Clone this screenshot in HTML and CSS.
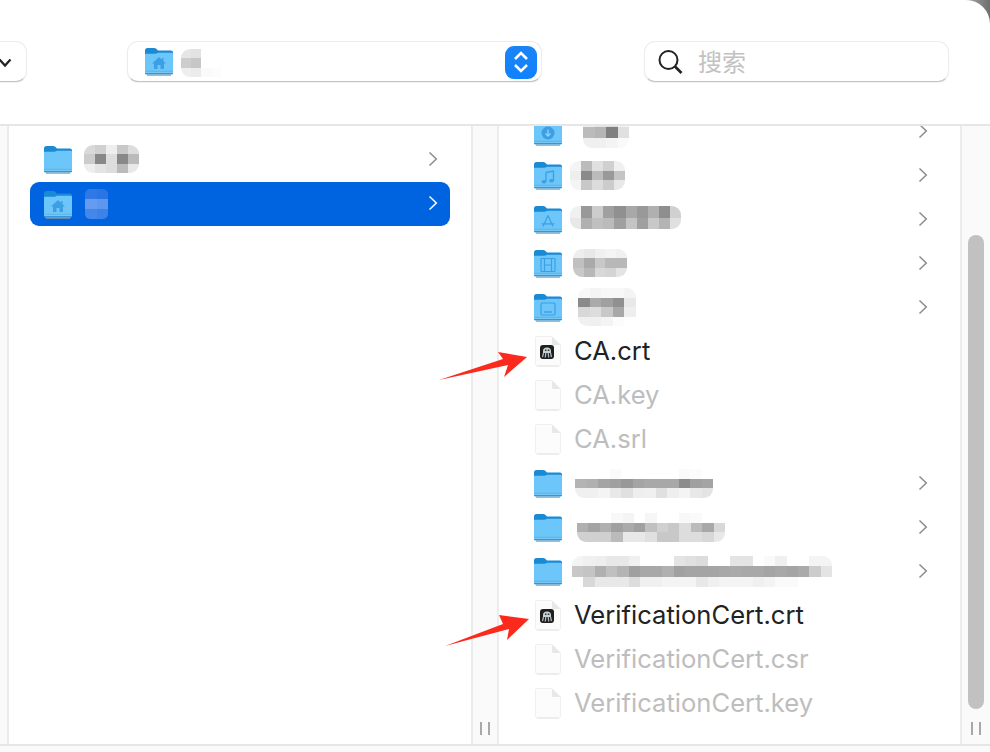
FILE: index.html
```html
<!DOCTYPE html>
<html lang="zh">
<head>
  <meta charset="utf-8">
  <meta name="viewport" content="width=device-width, initial-scale=1.0">
  <title>Finder</title>
  <link rel="stylesheet" href="styles.css">
</head>
<body>
  <!-- shared icons -->
  <svg class="defs" width="0" height="0">
    <symbol id="folder" viewBox="0 0 30 29">
      <path d="M1 3.500Q1 1 3.500 1H10Q11.500 1 12.500 2L14 3.500H27Q29 3.500 29 5.500V12H1Z" fill="#1a8ad4"/>
      <path d="M1 7.500Q1 6.800 2 6.800H11Q12.500 6.800 14 5.800H28Q29 5.800 29 6.800V25.500Q29 27.500 27 27.500H3Q1 27.500 1 25.500Z" fill="#6cc6fa"/>
      <path d="M1 22.500H29V25.500Q29 27.500 27 27.500H3Q1 27.500 1 25.500Z" fill="#5cb9f2"/>
      <path d="M1 23H29M1 25.600H29" stroke="#86d0f8" stroke-width=".7"/>
      <path d="M1 26.600H29" stroke="#2f93d6" stroke-width="1"/>
      <path d="M3 28.200H27" stroke="#8d959c" stroke-width="1"/>
    </symbol>
    <symbol id="doc" viewBox="0 0 29 32">
      <path d="M2.500 3Q2.500 1.500 4 1.500H19L27.500 10V29Q27.500 30.500 26 30.500H4Q2.500 30.500 2.500 29Z" fill="#fcfcfc" stroke="#f0f0f0"/>
      <path d="M19 1.500V8.500Q19 10 20.500 10H27.500Z" fill="#e8e8e8"/>
      <path d="M4 31.300H26" stroke="#e2e2e2" stroke-width=".8"/>
    </symbol>
    <symbol id="cert" viewBox="0 0 29 32">
      <use href="#doc" width="29" height="32"/>
      <rect x="7" y="10" width="14" height="14" rx="3" fill="#1f1f1f"/>
      <path d="M10 17Q9.500 12.500 14 12.500T18 17V18H10Z" fill="#c8d1d6"/>
      <path d="M10.500 18L9.500 22M12.800 18L12.300 22.500M15.200 18L15.700 22.500M17.500 18L18.500 22" stroke="#aeb8bf" stroke-width="1.300" fill="none"/>
      <rect x="12" y="14.500" width="1.500" height="1.500" fill="#333"/><rect x="14.800" y="14.500" width="1.500" height="1.500" fill="#333"/>
    </symbol>
    <symbol id="chev" viewBox="0 0 10 16">
      <path d="M1.500 1.500L8.300 8L1.500 14.500" fill="none" stroke="currentColor" stroke-width="1.500"/>
    </symbol>
  </svg>

  <div class="window">
    <header class="toolbar">
      <div class="group-btn">
        <svg width="14" height="10" viewBox="0 0 14 10"><path d="M1.500 1.500L7 7.500L12.500 1.500" fill="none" stroke="#222" stroke-width="2.200"/></svg>
      </div>
      <div class="path-select">
        <span class="icon-wrap">
          <svg class="folder" width="30" height="29"><use href="#folder"/></svg>
          <svg class="glyph" width="16" height="14" viewBox="0 0 16 14"><path d="M8 1L1 7.500H3V13H6.500V9H9.500V13H13V7.500H15L12.500 5.200V2H11V3.800Z" fill="#3c9fe4"/></svg>
        </span>
        <svg class="blur blur-path" viewBox="0 0 5 3" width="50" height="28" preserveAspectRatio="none">
          <rect x="0" y="0" fill="#e6e6e6"/><rect x="1" y="0" fill="#e2e2e2"/>
          <rect x="0" y="1" fill="#cdcdcd"/><rect x="1" y="1" fill="#c6c6c6"/>
          <rect x="0" y="2" fill="#eeeeee"/><rect x="1" y="2" fill="#ebebeb"/>
          <rect x="2" y="2" fill="#fafafa"/><rect x="3" y="2" fill="#fcfcfc"/>
        </svg>
        <span class="stepper">
          <svg width="20" height="26" viewBox="0 0 20 26"><path d="M4 10L10 4L16 10M4 16L10 22L16 16" fill="none" stroke="#fff" stroke-width="2.600"/></svg>
        </span>
      </div>
      <div class="search">
        <svg class="search-icon" width="26" height="28" viewBox="0 0 26 28"><circle cx="11.500" cy="12" r="9" fill="none" stroke="#222" stroke-width="2"/><path d="M18 18.500L24.500 25" stroke="#222" stroke-width="2.600"/></svg>
        <span class="search-text">搜索</span>
      </div>
    </header>

    <main class="browser">
      <div class="edge"></div>

      <section class="column column-left">
        <div class="row">
          <svg class="folder" width="30" height="29"><use href="#folder"/></svg>
          <svg class="blur blur-a" viewBox="0 0 5 3" width="55" height="28" preserveAspectRatio="none">
            <rect x="0" y="0" fill="#d9d9d9"/><rect x="1" y="0" fill="#d0d0d0"/><rect x="2" y="0" fill="#eeeeee"/><rect x="3" y="0" fill="#c8c8c8"/><rect x="4" y="0" fill="#dddddd"/>
            <rect x="0" y="1" fill="#cccccc"/><rect x="1" y="1" fill="#888888"/><rect x="2" y="1" fill="#dddddd"/><rect x="3" y="1" fill="#888888"/><rect x="4" y="1" fill="#bbbbbb"/>
            <rect x="0" y="2" fill="#eeeeee"/><rect x="1" y="2" fill="#e4e4e4"/><rect x="2" y="2" fill="#dddddd"/><rect x="3" y="2" fill="#bbbbbb"/><rect x="4" y="2" fill="#e8e8e8"/>
          </svg>
          <svg class="chevron" width="10" height="16"><use href="#chev"/></svg>
        </div>
        <div class="row selected">
          <span class="icon-wrap">
            <svg class="folder" width="30" height="29"><use href="#folder"/></svg>
            <svg class="glyph" width="16" height="14" viewBox="0 0 16 14"><path d="M8 1L1 7.500H3V13H6.500V9H9.500V13H13V7.500H15L12.500 5.200V2H11V3.800Z" fill="#3c9fe4"/></svg>
          </span>
          <svg class="blur blur-b" viewBox="0 0 2 3" width="23" height="30" preserveAspectRatio="none">
            <rect x="0" y="0" fill="#2f78e6"/><rect x="1" y="0" fill="#2a74e4"/>
            <rect x="0" y="1" fill="#659cef"/><rect x="1" y="1" fill="#5e97ee"/>
            <rect x="0" y="2" fill="#4487ea"/><rect x="1" y="2" fill="#3c82e8"/>
          </svg>
          <svg class="chevron" width="10" height="16"><use href="#chev"/></svg>
        </div>
      </section>

      <div class="gutter"><span class="handle"></span></div>

      <section class="column column-right">
        <div class="list">
          <div class="row">
            <span class="icon-wrap">
              <svg class="folder" width="30" height="29"><use href="#folder"/></svg>
              <svg class="glyph" width="14" height="14" viewBox="0 0 14 14"><circle cx="7" cy="7" r="6.500" fill="#3c9fe4"/><path d="M7 3.500V10M4.500 7.500L7 10L9.500 7.500" fill="none" stroke="#8ed3fb" stroke-width="1.300"/></svg>
            </span>
            <svg class="blur blur-dl" viewBox="0 0 4 3" width="46" height="31" preserveAspectRatio="none">
              <rect x="0" y="0" fill="#eeeeee"/><rect x="1" y="0" fill="#e4e4e4"/><rect x="2" y="0" fill="#dddddd"/><rect x="3" y="0" fill="#f4f4f4"/>
              <rect x="0" y="1" fill="#bbbbbb"/><rect x="1" y="1" fill="#b5b5b5"/><rect x="2" y="1" fill="#808080"/><rect x="3" y="1" fill="#e0e0e0"/>
              <rect x="0" y="2" fill="#f0f0f0"/><rect x="1" y="2" fill="#f0f0f0"/><rect x="2" y="2" fill="#f4f4f4"/><rect x="3" y="2" fill="#fafafa"/>
            </svg>
            <svg class="chevron" width="10" height="16"><use href="#chev"/></svg>
          </div>
          <div class="row">
            <span class="icon-wrap">
              <svg class="folder" width="30" height="29"><use href="#folder"/></svg>
              <svg class="glyph" width="14" height="14" viewBox="0 0 14 14"><path d="M5 2.500L12.500 1V10.500" fill="none" stroke="#3c9fe4" stroke-width="1.300"/><path d="M5 2.500V11.500" stroke="#3c9fe4" stroke-width="1.300"/><ellipse cx="3" cy="11.700" rx="2.400" ry="1.700" fill="#3c9fe4"/><ellipse cx="10.500" cy="10.700" rx="2.400" ry="1.700" fill="#3c9fe4"/></svg>
            </span>
            <svg class="blur blur-mu" viewBox="0 0 5 3" width="55" height="29" preserveAspectRatio="none">
              <rect x="0" y="0" fill="#f4f4f4"/><rect x="1" y="0" fill="#bbbbbb"/><rect x="2" y="0" fill="#e0e0e0"/><rect x="3" y="0" fill="#d0d0d0"/><rect x="4" y="0" fill="#f0f0f0"/>
              <rect x="0" y="1" fill="#eeeeee"/><rect x="1" y="1" fill="#8a8a8a"/><rect x="2" y="1" fill="#bbbbbb"/><rect x="3" y="1" fill="#999999"/><rect x="4" y="1" fill="#c4c4c4"/>
              <rect x="0" y="2" fill="#f4f4f4"/><rect x="1" y="2" fill="#c8c8c8"/><rect x="2" y="2" fill="#dcdcdc"/><rect x="3" y="2" fill="#cccccc"/><rect x="4" y="2" fill="#e8e8e8"/>
            </svg>
            <svg class="chevron" width="10" height="16"><use href="#chev"/></svg>
          </div>
          <div class="row">
            <span class="icon-wrap">
              <svg class="folder" width="30" height="29"><use href="#folder"/></svg>
              <svg class="glyph" width="16" height="14" viewBox="0 0 16 14"><path d="M8 1.500L3 12.500M8 1.500L13 12.500M1.500 9.800H14.500" fill="none" stroke="#3c9fe4" stroke-width="1.200"/></svg>
            </span>
            <svg class="blur blur-ap" viewBox="0 0 10 2" width="111" height="23" preserveAspectRatio="none">
              <rect x="0" y="0" fill="#f0f0f0"/><rect x="1" y="0" fill="#999999"/><rect x="2" y="0" fill="#cccccc"/><rect x="3" y="0" fill="#a0a0a0"/><rect x="4" y="0" fill="#909090"/><rect x="5" y="0" fill="#a8a8a8"/><rect x="6" y="0" fill="#999999"/><rect x="7" y="0" fill="#b0b0b0"/><rect x="8" y="0" fill="#8e8e8e"/><rect x="9" y="0" fill="#d0d0d0"/>
              <rect x="0" y="1" fill="#e8e8e8"/><rect x="1" y="1" fill="#b0b0b0"/><rect x="2" y="1" fill="#c0c0c0"/><rect x="3" y="1" fill="#bbbbbb"/><rect x="4" y="1" fill="#a0a0a0"/><rect x="5" y="1" fill="#c4c4c4"/><rect x="6" y="1" fill="#a0a0a0"/><rect x="7" y="1" fill="#c8c8c8"/><rect x="8" y="1" fill="#b4b4b4"/><rect x="9" y="1" fill="#e0e0e0"/>
            </svg>
            <svg class="chevron" width="10" height="16"><use href="#chev"/></svg>
          </div>
          <div class="row">
            <span class="icon-wrap">
              <svg class="folder" width="30" height="29"><use href="#folder"/></svg>
              <svg class="glyph" width="16" height="15" viewBox="0 0 16 15"><rect x="1" y="1" width="14" height="13" rx="1" fill="none" stroke="#3c9fe4" stroke-width="1.200"/><path d="M4.500 1V14M11.500 1V14M4.500 7.500H11.500" stroke="#3c9fe4" stroke-width="1.200"/></svg>
            </span>
            <svg class="blur blur-fi" viewBox="0 0 5 3" width="54" height="28" preserveAspectRatio="none">
              <rect x="0" y="0" fill="#eeeeee"/><rect x="1" y="0" fill="#e8e8e8"/><rect x="2" y="0" fill="#f0f0f0"/><rect x="3" y="0" fill="#f4f4f4"/><rect x="4" y="0" fill="#f0f0f0"/>
              <rect x="0" y="1" fill="#c0c0c0"/><rect x="1" y="1" fill="#aaaaaa"/><rect x="2" y="1" fill="#c8c8c8"/><rect x="3" y="1" fill="#b8b8b8"/><rect x="4" y="1" fill="#b8b8b8"/>
              <rect x="0" y="2" fill="#c8c8c8"/><rect x="1" y="2" fill="#b8b8b8"/><rect x="2" y="2" fill="#d8d8d8"/><rect x="3" y="2" fill="#d4d4d4"/><rect x="4" y="2" fill="#e4e4e4"/>
            </svg>
            <svg class="chevron" width="10" height="16"><use href="#chev"/></svg>
          </div>
          <div class="row">
            <span class="icon-wrap">
              <svg class="folder" width="30" height="29"><use href="#folder"/></svg>
              <svg class="glyph" width="16" height="14" viewBox="0 0 16 14"><rect x="1" y="1" width="14" height="12" rx="1.500" fill="none" stroke="#3c9fe4" stroke-width="1.200"/><path d="M4 10H12" stroke="#3c9fe4" stroke-width="1.400"/></svg>
            </span>
            <svg class="blur blur-di" viewBox="0 0 5 4" width="58" height="38" preserveAspectRatio="none">
              <rect x="0" y="0" fill="#f8f8f8"/><rect x="1" y="0" fill="#f4f4f4"/><rect x="2" y="0" fill="#f8f8f8"/><rect x="3" y="0" fill="#f8f8f8"/><rect x="4" y="0" fill="#f4f4f4"/>
              <rect x="0" y="1" fill="#8a8a8a"/><rect x="1" y="1" fill="#aaaaaa"/><rect x="2" y="1" fill="#a0a0a0"/><rect x="3" y="1" fill="#909090"/><rect x="4" y="1" fill="#e8e8e8"/>
              <rect x="0" y="2" fill="#d8d8d8"/><rect x="1" y="2" fill="#dddddd"/><rect x="2" y="2" fill="#c8c8c8"/><rect x="3" y="2" fill="#a8a8a8"/><rect x="4" y="2" fill="#eeeeee"/>
              <rect x="0" y="3" fill="#f0f0f0"/><rect x="1" y="3" fill="#f0f0f0"/><rect x="2" y="3" fill="#f4f4f4"/><rect x="3" y="3" fill="#fcfcfc"/><rect x="4" y="3" fill="#ffffff"/>
            </svg>
            <svg class="chevron" width="10" height="16"><use href="#chev"/></svg>
          </div>
          <div class="row">
            <svg class="file" width="29" height="32"><use href="#cert"/></svg>
            <span class="name">CA.crt</span>
          </div>
          <div class="row dim">
            <svg class="file" width="29" height="32"><use href="#doc"/></svg>
            <span class="name">CA.key</span>
          </div>
          <div class="row dim">
            <svg class="file" width="29" height="32"><use href="#doc"/></svg>
            <span class="name">CA.srl</span>
          </div>
          <div class="row">
            <svg class="folder" width="30" height="29"><use href="#folder"/></svg>
            <svg class="blur blur-r1" viewBox="0 0 12 3" width="138" height="29" preserveAspectRatio="none">
              <rect x="9" y="0" fill="#fafafa"/><rect x="3" y="0" fill="#fafafa"/><rect x="10" y="0" fill="#fcfcfc"/>
              <rect x="0" y="1" fill="#b4b4b4"/><rect x="1" y="1" fill="#b0b0b0"/><rect x="2" y="1" fill="#a4a4a4"/><rect x="3" y="1" fill="#a0a0a0"/><rect x="4" y="1" fill="#989898"/><rect x="5" y="1" fill="#a4a4a4"/><rect x="6" y="1" fill="#a8a8a8"/><rect x="7" y="1" fill="#a8a8a8"/><rect x="8" y="1" fill="#a8a8a8"/><rect x="9" y="1" fill="#8c8c8c"/><rect x="10" y="1" fill="#a0a0a0"/><rect x="11" y="1" fill="#a4a4a4"/>
              <rect x="0" y="2" fill="#f0f0f0"/><rect x="1" y="2" fill="#f0f0f0"/><rect x="2" y="2" fill="#f4f4f4"/><rect x="3" y="2" fill="#e8e8e8"/><rect x="4" y="2" fill="#e0e0e0"/><rect x="5" y="2" fill="#eeeeee"/><rect x="6" y="2" fill="#f0f0f0"/><rect x="7" y="2" fill="#e0e0e0"/><rect x="8" y="2" fill="#eeeeee"/><rect x="9" y="2" fill="#f4f4f4"/><rect x="10" y="2" fill="#e8e8e8"/><rect x="11" y="2" fill="#e4e4e4"/>
            </svg>
            <svg class="chevron" width="10" height="16"><use href="#chev"/></svg>
          </div>
          <div class="row">
            <svg class="folder" width="30" height="29"><use href="#folder"/></svg>
            <svg class="blur blur-r2" viewBox="0 0 13 3" width="148" height="29" preserveAspectRatio="none">
              <rect x="3" y="0" fill="#f8f8f8"/><rect x="4" y="0" fill="#f4f4f4"/><rect x="6" y="0" fill="#f6f6f6"/><rect x="9" y="0" fill="#f8f8f8"/><rect x="10" y="0" fill="#fafafa"/>
              <rect x="0" y="1" fill="#b0b0b0"/><rect x="1" y="1" fill="#a4a4a4"/><rect x="2" y="1" fill="#b0b0b0"/><rect x="3" y="1" fill="#a0a0a0"/><rect x="4" y="1" fill="#aaaaaa"/><rect x="5" y="1" fill="#a0a0a0"/><rect x="6" y="1" fill="#c0c0c0"/><rect x="7" y="1" fill="#d0d0d0"/><rect x="8" y="1" fill="#c8c8c8"/><rect x="9" y="1" fill="#dddddd"/><rect x="10" y="1" fill="#bbbbbb"/><rect x="11" y="1" fill="#a8a8a8"/><rect x="12" y="1" fill="#d8d8d8"/>
              <rect x="0" y="2" fill="#d0d0d0"/><rect x="1" y="2" fill="#d0d0d0"/><rect x="2" y="2" fill="#d0d0d0"/><rect x="3" y="2" fill="#bbbbbb"/><rect x="4" y="2" fill="#e8e8e8"/><rect x="5" y="2" fill="#e8e8e8"/><rect x="6" y="2" fill="#e0e0e0"/><rect x="7" y="2" fill="#c8c8c8"/><rect x="8" y="2" fill="#c8c8c8"/><rect x="9" y="2" fill="#dddddd"/><rect x="10" y="2" fill="#dddddd"/><rect x="11" y="2" fill="#d8d8d8"/><rect x="12" y="2" fill="#e8e8e8"/>
            </svg>
            <svg class="chevron" width="10" height="16"><use href="#chev"/></svg>
          </div>
          <div class="row">
            <svg class="folder" width="30" height="29"><use href="#folder"/></svg>
            <svg class="blur blur-r3" viewBox="0 0 23 3" width="260" height="31" preserveAspectRatio="none">
              <rect x="0" y="0" fill="#f4f4f4"/><rect x="1" y="0" fill="#f0f0f0"/><rect x="2" y="0" fill="#eeeeee"/><rect x="3" y="0" fill="#e8e8e8"/><rect x="4" y="0" fill="#e8e8e8"/><rect x="5" y="0" fill="#f0f0f0"/><rect x="9" y="0" fill="#e4e4e4"/><rect x="10" y="0" fill="#e0e0e0"/><rect x="11" y="0" fill="#dcdcdc"/><rect x="14" y="0" fill="#e4e4e4"/><rect x="15" y="0" fill="#e4e4e4"/><rect x="17" y="0" fill="#fafafa"/><rect x="18" y="0" fill="#f0f0f0"/><rect x="21" y="0" fill="#f4f4f4"/><rect x="22" y="0" fill="#f4f4f4"/>
              <rect x="0" y="1" fill="#c8c8c8"/><rect x="1" y="1" fill="#c4c4c4"/><rect x="2" y="1" fill="#b0b0b0"/><rect x="3" y="1" fill="#c0c0c0"/><rect x="4" y="1" fill="#b4b4b4"/><rect x="5" y="1" fill="#a0a0a0"/><rect x="6" y="1" fill="#a8a8a8"/><rect x="7" y="1" fill="#a8a8a8"/><rect x="8" y="1" fill="#b0b0b0"/><rect x="9" y="1" fill="#a0a0a0"/><rect x="10" y="1" fill="#a4a4a4"/><rect x="11" y="1" fill="#a4a4a4"/><rect x="12" y="1" fill="#a4a4a4"/><rect x="13" y="1" fill="#a8a8a8"/><rect x="14" y="1" fill="#aaaaaa"/><rect x="15" y="1" fill="#a8a8a8"/><rect x="16" y="1" fill="#a8a8a8"/><rect x="17" y="1" fill="#a4a4a4"/><rect x="18" y="1" fill="#a8a8a8"/><rect x="19" y="1" fill="#a4a4a4"/><rect x="20" y="1" fill="#aaaaaa"/><rect x="21" y="1" fill="#cccccc"/><rect x="22" y="1" fill="#e4e4e4"/>
              <rect x="1" y="2" fill="#d8d8d8"/><rect x="2" y="2" fill="#e8e8e8"/><rect x="3" y="2" fill="#e8e8e8"/><rect x="4" y="2" fill="#e8e8e8"/><rect x="5" y="2" fill="#dcdcdc"/><rect x="6" y="2" fill="#f0f0f0"/><rect x="7" y="2" fill="#f0f0f0"/><rect x="8" y="2" fill="#f4f4f4"/><rect x="9" y="2" fill="#f4f4f4"/><rect x="10" y="2" fill="#f4f4f4"/><rect x="11" y="2" fill="#e8e8e8"/><rect x="12" y="2" fill="#f0f0f0"/><rect x="13" y="2" fill="#f4f4f4"/><rect x="14" y="2" fill="#f4f4f4"/><rect x="15" y="2" fill="#f4f4f4"/><rect x="16" y="2" fill="#f0f0f0"/><rect x="17" y="2" fill="#f4f4f4"/><rect x="18" y="2" fill="#fafafa"/><rect x="19" y="2" fill="#fafafa"/>
            </svg>
            <svg class="chevron" width="10" height="16"><use href="#chev"/></svg>
          </div>
          <div class="row">
            <svg class="file" width="29" height="32"><use href="#cert"/></svg>
            <span class="name">VerificationCert.crt</span>
          </div>
          <div class="row dim">
            <svg class="file" width="29" height="32"><use href="#doc"/></svg>
            <span class="name">VerificationCert.csr</span>
          </div>
          <div class="row dim">
            <svg class="file" width="29" height="32"><use href="#doc"/></svg>
            <span class="name">VerificationCert.key</span>
          </div>
        </div>
      </section>

      <div class="gutter gutter-scroll">
        <span class="thumb"></span>
        <span class="handle"></span>
      </div>
    </main>

    <footer class="statusbar"></footer>
  </div>

  <!-- red annotation arrows drawn over the screenshot -->
  <svg class="arrows" width="990" height="752" viewBox="0 0 990 752">
    <path d="M439 380L503 359L498 352L527 357L504 377L508 365Z" fill="#fb2a1c"/>
    <path d="M445 646L503 624L499 615L529 619L507 640L509 629Z" fill="#fb2a1c"/>
  </svg>
</body>
</html>
```

FILE: styles.css
```css
html, body {
  height: 100%;
}

body {
  margin: 0;
  overflow: hidden;
  background: linear-gradient(to left, #6e6e6e, #b5b5b5 30px);
  font-family: Inter, "Liberation Sans", "Noto Sans CJK SC", sans-serif;
  color: #222;
}

.defs {
  position: absolute;
}

.window {
  display: flex;
  flex-direction: column;
  height: 752px;
  background: #fff;
  border-top-right-radius: 24px;
  overflow: hidden;
}

/* toolbar */
.toolbar {
  display: flex;
  align-items: flex-start;
  height: 124px;
  padding-top: 41px;
  box-sizing: border-box;
  flex-shrink: 0;
}

.group-btn,
.path-select,
.search {
  display: flex;
  align-items: center;
  height: 41px;
  box-sizing: border-box;
  background: #fff;
  border: 1px solid #ececec;
  border-bottom-color: #c4c4c4;
  border-radius: 11px;
  box-shadow: 0 1px 1px rgba(0, 0, 0, 0.06);
}

.group-btn {
  width: 28px;
  margin-left: -1px;
  border-left: none;
  border-radius: 0 11px 11px 0;
}

.group-btn svg {
  margin: 2px 0 0 -1px;
}

.path-select {
  width: 415px;
  margin-left: 100px;
  padding-left: 16px;
}

.stepper {
  display: flex;
  align-items: center;
  justify-content: center;
  width: 32px;
  height: 33px;
  margin: 1px 4px 0 auto;
  border-radius: 9px;
  background: linear-gradient(#1c84f4, #0f82ff);
}

.search {
  width: 305px;
  margin-left: 102px;
  padding-left: 12px;
}

.search-icon {
  margin-top: 1px;
}

.search-text {
  margin: 2px 0 0 15px;
  font-size: 24px;
  line-height: 28px;
  color: #c2c2c2;
}

/* columns */
.browser {
  display: flex;
  flex: 1;
  min-height: 0;
  border-top: 2px solid #e6e6e6;
  border-bottom: 2px solid #e6e6e6;
}

.edge {
  width: 7px;
  background: #fafafa;
  border-right: 2px solid #ececec;
  flex-shrink: 0;
}

.column {
  overflow: hidden;
  flex-shrink: 0;
}

.column-left {
  width: 462px;
  padding: 11px 21px 0;
  box-sizing: border-box;
}

.column-right {
  width: 461px;
}

.list {
  margin-top: -17px;
  padding: 0 21px;
}

.gutter {
  display: flex;
  flex-direction: column;
  align-items: center;
  justify-content: flex-end;
  width: 28px;
  padding-bottom: 9px;
  box-sizing: border-box;
  background: #fafafa;
  border-left: 2px solid #ececec;
  border-right: 2px solid #ececec;
  flex-shrink: 0;
}

.gutter-scroll {
  flex: 1;
  width: auto;
  border-right: none;
}

.handle {
  width: 10px;
  height: 13px;
  box-sizing: border-box;
  border-left: 2px solid #a8a8a8;
  border-right: 2px solid #a8a8a8;
}

.thumb {
  width: 16px;
  margin-top: 109px;
  margin-bottom: 13px;
  flex: 1;
  border-radius: 8px;
  background: #c1c1c1;
}

/* rows */
.row {
  display: flex;
  align-items: center;
  height: 44px;
  padding: 0 13px;
  border-radius: 9px;
  color: #222;
}

.row.selected {
  margin-top: 1px;
  color: #fff;
  background: #0064e1;
}

.row.dim .name {
  color: #bdbdbd;
}

.folder,
.file {
  display: block;
  flex-shrink: 0;
}

.file {
  margin-right: 12px;
}

.icon-wrap {
  position: relative;
  display: block;
  width: 30px;
  height: 29px;
  flex-shrink: 0;
}

.glyph {
  position: absolute;
  left: 50%;
  top: 56%;
  transform: translate(-50%, -50%);
}

.name {
  font-size: 25.6px;
  line-height: 32px;
  white-space: nowrap;
}

.chevron {
  margin-left: auto;
  margin-right: -1px;
  flex-shrink: 0;
  color: #8b8b8b;
}

.list .chevron {
  margin-right: -2px;
}

.selected .chevron {
  margin-top: -2px;
  color: #fff;
}

/* blurred-out labels */
.blur {
  display: block;
  flex-shrink: 0;
  shape-rendering: crispEdges;
  border-radius: 9px;
}

.blur rect {
  width: 1.01px;
  height: 1.01px;
}

.blur-path { margin: 3px 0 0 7px; }
.blur-a { margin: 0 0 0 11px; }
.blur-b { margin: 0 0 0 12px; border-radius: 5px; }
.blur-dl { margin: 3px 0 0 20px; }
.blur-mu { margin: 0 0 0 7px; }
.blur-ap { margin: -3px 0 0 7px; }
.blur-fi { margin: 0 0 0 10px; }
.blur-di { margin: 0 0 0 15px; }
.blur-r1 { margin: 0 0 0 12px; }
.blur-r2 { margin: 0 0 0 14px; }
.blur-r3 { margin: 0 0 0 9px; }

.statusbar {
  height: 6px;
  background: #fafafa;
  flex-shrink: 0;
}

.arrows {
  position: absolute;
  left: 0;
  top: 0;
  pointer-events: none;
}
```
